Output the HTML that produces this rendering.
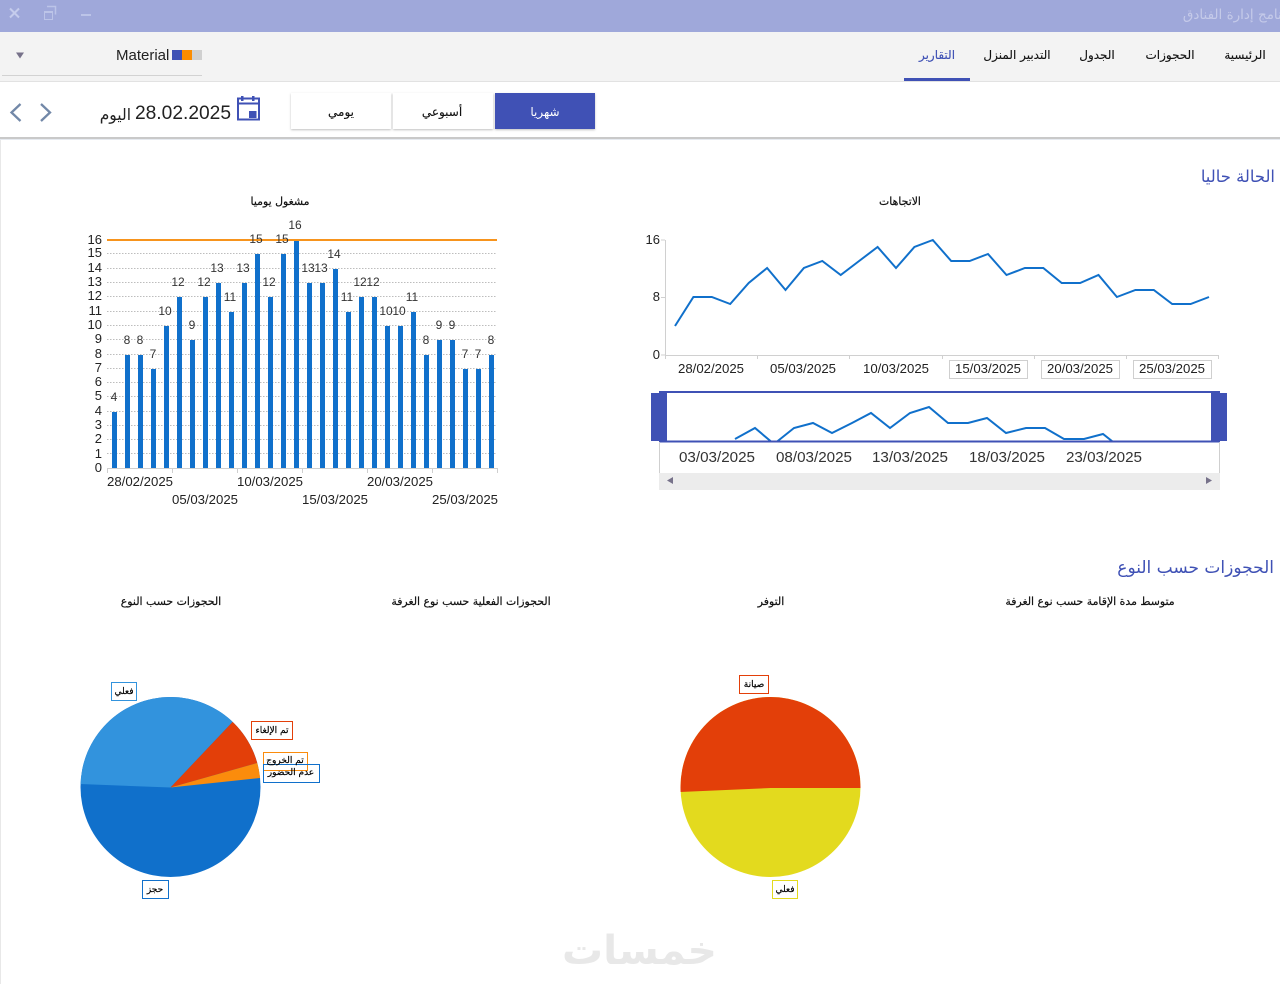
<!DOCTYPE html>
<html lang="ar"><head><meta charset="utf-8"><title>برنامج إدارة الفنادق</title>
<style>
html,body{margin:0;padding:0;background:#fff;width:1280px;height:984px;overflow:hidden}
svg{display:block;position:absolute;left:0;top:0}
text{font-family:"Liberation Sans","DejaVu Sans",sans-serif;fill:#222}
.ar{font-family:"DejaVu Sans","Liberation Sans",sans-serif}
.v{font-size:12px;text-anchor:middle;fill:#333}
.y{font-size:13px;text-anchor:end;fill:#222}
.x{font-size:13.2px;text-anchor:middle;fill:#222}
.x2{font-size:15.2px;text-anchor:middle;fill:#333}
.t{font-size:10.9px;text-anchor:middle;fill:#111;stroke:#111;stroke-width:.2px}
.m{font-size:12px;text-anchor:middle;fill:#111;stroke:#111;stroke-width:.12px}
.h{font-size:17px;text-anchor:end;fill:#3F51B5}
.l{font-size:9px;text-anchor:middle;fill:#000;stroke:#000;stroke-width:.2px}
</style></head><body>
<svg width="1280" height="984" viewBox="0 0 1280 984" xmlns="http://www.w3.org/2000/svg">
<defs>
<filter id="s" x="-5%" y="-10%" width="110%" height="125%"><feDropShadow dx="0" dy="1" stdDeviation="1" flood-color="#000" flood-opacity=".25"/></filter>
<clipPath id="c1"><polygon points="170.500,787.500 294.500,656.500 294.500,591 -10,591 -10,780.500"/></clipPath>
<clipPath id="c2"><polygon points="170.500,787.500 294.500,656.500 343.500,656.500 343.500,738.500"/></clipPath>
<clipPath id="c3"><polygon points="170.500,787.500 343.500,738.500 350,768.500"/></clipPath>
<clipPath id="c4"><polygon points="861,788 770.500,788 680,792 680,690 861,690"/></clipPath>
</defs>
<rect width="1280" height="984" fill="#fff"/>
<rect width="1280" height="32" fill="#9FA8DA"/>
<text class="ar" x="1293" y="19" style="font-size:13.500px;text-anchor:end;fill:#C5CAE9">برنامج إدارة الفنادق</text>
<path d="M10 8.500l9 9M19 8.500l-9 9" stroke="#C5CCEC" stroke-width="2" fill="none"/>
<path d="M44.500 12.500h8v7h-8z" stroke="#BCC4E8" fill="none"/><rect x="44" y="11" width="9" height="2" fill="#BCC4E8"/>
<path d="M47 6.500h8.500v8" stroke="#BCC4E8" stroke-width="1.500" fill="none"/>
<rect x="81" y="14" width="10" height="2" fill="#BCC4E8"/>

<rect y="32" width="1280" height="49" fill="#F3F3F3"/>
<rect y="81" width="1280" height="1" fill="#E2E2E2"/>
<text x="116" y="60" style="font-size:15px;fill:#222">Material</text>
<rect x="172" y="50" width="10" height="10" fill="#3F51B5"/><rect x="182" y="50" width="10" height="10" fill="#FB8C00"/><rect x="192" y="50" width="10" height="10" fill="#D0D0D0"/>
<path d="M16 52.500h8l-4 6z" fill="#77728a"/>
<rect x="2" y="75" width="200" height="1" fill="#D2D2D2"/>
<text class="m ar" x="1245" y="59">الرئيسية</text>
<text class="m ar" x="1170" y="59">الحجوزات</text>
<text class="m ar" x="1097" y="59">الجدول</text>
<text class="m ar" x="1017" y="59">التدبير المنزل</text>
<text class="m ar" x="937" y="59" style="fill:#3F51B5;stroke:#3F51B5">التقارير</text>
<rect x="904" y="78" width="66" height="3" fill="#3F51B5"/>

<path d="M20.500 104l-9 8.500 9 8.500" fill="none" stroke="#7288A8" stroke-width="2.300"/>
<path d="M41 104l9 8.500-9 8.500" fill="none" stroke="#7288A8" stroke-width="2.300"/>
<text x="231" y="119" style="font-size:19.200px;text-anchor:end;fill:#222">28.02.2025</text>
<text class="ar" x="131" y="120" style="font-size:15.500px;text-anchor:end;fill:#222">اليوم</text>
<path d="M238 98.500h21v21h-21zM238 103.500h21" fill="none" stroke="#3F51B5" stroke-width="2"/>
<rect x="241" y="96" width="2.500" height="5" fill="#3F51B5"/><rect x="252" y="96" width="2.500" height="5" fill="#3F51B5"/>
<rect x="249" y="111" width="7.500" height="7" fill="#3F51B5"/>

<rect x="291" y="93" width="100" height="36" fill="#fff" filter="url(#s)"/>
<rect x="393" y="93" width="100" height="36" fill="#fff" filter="url(#s)"/>
<rect x="495" y="93" width="100" height="36" fill="#3F51B5" filter="url(#s)"/>
<text class="m ar" x="341" y="116">يومي</text>
<text class="m ar" x="442" y="116">أسبوعي</text>
<text class="m ar" x="545" y="116" style="fill:#fff;stroke:none">شهريا</text>
<rect y="137" width="1280" height="2" fill="#C9C9C9"/><rect y="139" width="1280" height="1" fill="#E6EAF0"/>
<rect x="0" y="140" width="1" height="844" fill="#E8E8E8"/>

<text class="ar h" x="1275" y="182" style="font-size:16.400px">الحالة حاليا</text>
<text class="ar t" x="280" y="205">مشغول يوميا</text>
<text class="ar t" x="900" y="205">الاتجاهات</text>

<!-- bar chart -->
<g stroke="#BDBDBD" stroke-dasharray="1.500 1.500" stroke-width="1">
<path d="M107 253.500H497M107 268.500H497M107 282.500H497M107 296.500H497M107 311.500H497M107 325.500H497M107 339.500H497M107 354.500H497M107 368.500H497M107 382.500H497M107 396.500H497M107 411.500H497M107 425.500H497M107 439.500H497M107 453.500H497"/>
</g>
<g class="y">
<text class="y" x="102" y="244">16</text><text class="y" x="102" y="257">15</text><text class="y" x="102" y="272">14</text><text class="y" x="102" y="286">13</text><text class="y" x="102" y="300">12</text><text class="y" x="102" y="315">11</text><text class="y" x="102" y="329">10</text><text class="y" x="102" y="343">9</text><text class="y" x="102" y="358">8</text><text class="y" x="102" y="372">7</text><text class="y" x="102" y="386">6</text><text class="y" x="102" y="400">5</text><text class="y" x="102" y="415">4</text><text class="y" x="102" y="429">3</text><text class="y" x="102" y="443">2</text><text class="y" x="102" y="458">1</text><text class="y" x="102" y="472">0</text>
</g>
<g fill="#1070CB">
<rect x="112" y="412" width="5" height="56"/><rect x="125" y="355" width="5" height="113"/><rect x="138" y="355" width="5" height="113"/><rect x="151" y="369" width="5" height="99"/><rect x="164" y="326" width="5" height="142"/><rect x="177" y="297" width="5" height="171"/><rect x="190" y="340" width="5" height="128"/><rect x="203" y="297" width="5" height="171"/><rect x="216" y="283" width="5" height="185"/><rect x="229" y="312" width="5" height="156"/><rect x="242" y="283" width="5" height="185"/><rect x="255" y="254" width="5" height="214"/><rect x="268" y="297" width="5" height="171"/><rect x="281" y="254" width="5" height="214"/><rect x="294" y="240" width="5" height="228"/><rect x="307" y="283" width="5" height="185"/><rect x="320" y="283" width="5" height="185"/><rect x="333" y="269" width="5" height="199"/><rect x="346" y="312" width="5" height="156"/><rect x="359" y="297" width="5" height="171"/><rect x="372" y="297" width="5" height="171"/><rect x="385" y="326" width="5" height="142"/><rect x="398" y="326" width="5" height="142"/><rect x="411" y="312" width="5" height="156"/><rect x="424" y="355" width="5" height="113"/><rect x="437" y="340" width="5" height="128"/><rect x="450" y="340" width="5" height="128"/><rect x="463" y="369" width="5" height="99"/><rect x="476" y="369" width="5" height="99"/><rect x="489" y="355" width="5" height="113"/>
</g>
<rect x="107" y="239" width="390" height="2" fill="#F7941D"/>
<path d="M107 468.500H497M107.500 468v5M172.500 468v5M237.500 468v5M302.500 468v5M367.500 468v5M432.500 468v5M497.500 468v5" stroke="#CFCFCF" fill="none"/>
<g>
<text class="v" x="114" y="401">4</text><text class="v" x="127" y="344">8</text><text class="v" x="140" y="344">8</text><text class="v" x="153" y="358">7</text><text class="v" x="165" y="315">10</text><text class="v" x="178" y="286">12</text><text class="v" x="192" y="329">9</text><text class="v" x="204" y="286">12</text><text class="v" x="217" y="272">13</text><text class="v" x="230" y="301">11</text><text class="v" x="243" y="272">13</text><text class="v" x="256" y="243">15</text><text class="v" x="269" y="286">12</text><text class="v" x="282" y="243">15</text><text class="v" x="295" y="229">16</text><text class="v" x="308" y="272">13</text><text class="v" x="321" y="272">13</text><text class="v" x="334" y="258">14</text><text class="v" x="347" y="301">11</text><text class="v" x="360" y="286">12</text><text class="v" x="373" y="286">12</text><text class="v" x="386" y="315">10</text><text class="v" x="399" y="315">10</text><text class="v" x="412" y="301">11</text><text class="v" x="426" y="344">8</text><text class="v" x="439" y="329">9</text><text class="v" x="452" y="329">9</text><text class="v" x="465" y="358">7</text><text class="v" x="478" y="358">7</text><text class="v" x="491" y="344">8</text>
</g>
<text class="x" x="140" y="486">28/02/2025</text><text class="x" x="270" y="486">10/03/2025</text><text class="x" x="400" y="486">20/03/2025</text>
<text class="x" x="205" y="504">05/03/2025</text><text class="x" x="335" y="504">15/03/2025</text><text class="x" x="465" y="504">25/03/2025</text>

<!-- line chart -->
<path d="M665.500 240V355.500H1218.500M661 240h4M661 297.500h4M661 355h4M665.500 355v4M757.500 355v4M849.500 355v4M942.500 355v4M1034.500 355v4M1126.500 355v4M1218.500 355v4" stroke="#D0D0D0" fill="none"/>
<text class="y" x="660" y="244">16</text><text class="y" x="660" y="301">8</text><text class="y" x="660" y="359">0</text>
<polyline fill="none" stroke="#1070CB" stroke-width="2" points="675,326 693.400,297 711.800,297 730.200,304 748.700,283 767.100,268 785.500,290 803.900,268 822.300,261 840.700,275 859.100,261 877.600,247 896,268 914.400,247 932.800,240 951.200,261 969.600,261 988,254 1006.500,275 1024.900,268 1043.300,268 1061.700,283 1080.100,283 1098.500,275 1116.900,297 1135.400,290 1153.800,290 1172.200,304 1190.600,304 1209,297"/>
<g fill="#fff" stroke="#CFCFCF"><rect x="949.500" y="360.500" width="78" height="18"/><rect x="1041.500" y="360.500" width="78" height="18"/><rect x="1133.500" y="360.500" width="78" height="18"/></g>
<text class="x" x="711" y="373">28/02/2025</text><text class="x" x="803" y="373">05/03/2025</text><text class="x" x="896" y="373">10/03/2025</text><text class="x" x="988" y="373">15/03/2025</text><text class="x" x="1080" y="373">20/03/2025</text><text class="x" x="1172" y="373">25/03/2025</text>

<!-- range selector -->
<polyline fill="none" stroke="#1070CB" stroke-width="2" points="735,439 755,428 774,444 794,428 813,423 832,433 852,423 871,413 890,428 910,413 929,407 948,423 968,423 987,418 1006,433 1026,428 1045,428 1064,439 1084,439 1103,434 1122,449"/>
<rect x="660" y="442" width="560" height="32" fill="#fff"/>
<rect x="651" y="393" width="16" height="48" fill="#3F51B5"/><rect x="1211" y="393" width="16" height="48" fill="#3F51B5"/>
<path d="M659 392h561M659 441.500h561" stroke="#3F51B5" stroke-width="2" fill="none"/>
<path d="M659.500 442v31M1219.500 442v31" stroke="#CFCFCF" fill="none"/>
<text class="x2" x="717" y="462">03/03/2025</text><text class="x2" x="814" y="462">08/03/2025</text><text class="x2" x="910" y="462">13/03/2025</text><text class="x2" x="1007" y="462">18/03/2025</text><text class="x2" x="1104" y="462">23/03/2025</text>
<rect x="659" y="473" width="561" height="17" fill="#ECECEC"/>
<path d="M673 477v7l-6-3.500z" fill="#77728a"/><path d="M1206 477v7l6-3.500z" fill="#77728a"/>

<text class="ar h" x="1274" y="573">الحجوزات حسب النوع</text>
<text class="ar t" x="1090" y="605">متوسط مدة الإقامة حسب نوع الغرفة</text>
<text class="ar t" x="771" y="605">التوفر</text>
<text class="ar t" x="471" y="605">الحجوزات الفعلية حسب نوع الغرفة</text>
<text class="ar t" x="171" y="605">الحجوزات حسب النوع</text>

<!-- pie 1 -->
<circle cx="170.500" cy="787" r="90" fill="#1070CB"/>
<circle cx="170.500" cy="787" r="90" fill="#3293DD" clip-path="url(#c1)"/>
<circle cx="170.500" cy="787" r="90" fill="#E33F09" clip-path="url(#c2)"/>
<circle cx="170.500" cy="787" r="90" fill="#FB8C0C" clip-path="url(#c3)"/>
<g fill="#fff" stroke-width="1">
<rect x="111.500" y="682.500" width="25" height="18" stroke="#3293DD"/>
<rect x="251.500" y="721.500" width="41" height="18" stroke="#E33F09"/>
<rect x="263.500" y="752.500" width="44" height="18" stroke="#FB8C0C"/>
<rect x="263.500" y="764.500" width="56" height="18" stroke="#1070CB" fill="none"/>
<rect x="142.500" y="880.500" width="26" height="18" stroke="#1070CB"/>
</g>
<text class="l ar" x="124" y="694">فعلي</text>
<text class="l ar" x="272" y="733">تم الإلغاء</text>
<text class="l ar" x="285" y="763">تم الخروج</text>
<text class="l ar" x="291" y="775">عدم الحضور</text>
<text class="l ar" x="155" y="892">حجز</text>

<!-- pie 2 -->
<circle cx="770.500" cy="787" r="90" fill="#E3DA1E"/>
<circle cx="770.500" cy="787" r="90" fill="#E33F09" clip-path="url(#c4)"/>
<rect x="739.500" y="675.500" width="29" height="18" fill="#fff" stroke="#E33F09"/>
<rect x="772.500" y="880.500" width="25" height="18" fill="#fff" stroke="#E3DA1E"/>
<text class="l ar" x="754" y="687">صيانة</text>
<text class="l ar" x="785" y="892">فعلي</text>

<!-- watermark -->
<text class="ar" x="562" y="964" textLength="155" lengthAdjust="spacingAndGlyphs" style="font-size:40px;fill:#E8E8E8;font-weight:bold">خمسات</text>
</svg>
</body></html>
